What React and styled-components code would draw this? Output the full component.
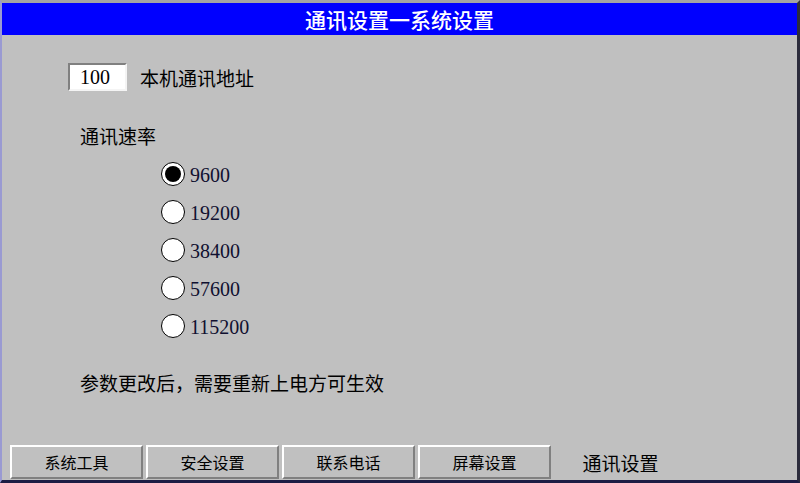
import React, { useState } from "react";
import styled, { createGlobalStyle } from "styled-components";

const GlobalStyle = createGlobalStyle`
  html, body {
    margin: 0;
    padding: 0;
    background: #c0c0c0;
  }
  #root {
    width: 800px;
    height: 483px;
  }
`;

const CJK = `"Noto Sans CJK SC", "Noto Sans", sans-serif`;
const NUM = `"Liberation Serif", "Times New Roman", serif`;

const Window = styled.div`
  box-sizing: border-box;
  width: 800px;
  height: 483px;
  display: flex;
  flex-direction: column;
  background: #c0c0c0;
  border-top: 3px solid #a4a4a4;
  border-left: 2px solid #9a9ad2;
  border-right: 3px solid #2c2c3c;
  border-bottom: 3px solid #1c1c44;
  font-family: ${CJK};
  color: #000;
`;

const TitleBar = styled.div`
  height: 32px;
  flex-shrink: 0;
  background: #0000ff;
  color: #fff;
  display: flex;
  align-items: center;
  justify-content: center;
  font-size: 21px;
  font-weight: 500;
`;

const Content = styled.div`
  padding: 28px 0 0 66px;
  display: flex;
  flex-direction: column;
`;

const AddressRow = styled.div`
  display: flex;
  align-items: center;
  gap: 13px;
  height: 28px;
`;

const NumberBox = styled.div`
  box-sizing: border-box;
  width: 59px;
  height: 28px;
  background: #fff;
  border-top: 2px solid #808080;
  border-left: 2px solid #808080;
  border-right: 2px solid #f4f4f4;
  border-bottom: 2px solid #f4f4f4;
  padding-left: 10px;
  display: flex;
  align-items: center;
  font-family: ${NUM};
  font-size: 20px;
`;

const Label = styled.div`
  font-size: 19px;
  line-height: 19px;
  margin-top: ${(p) => p.top || 0}px;
  padding-left: ${(p) => p.indent || 0}px;
`;

const RadioList = styled.div`
  margin-top: 10px;
  padding-left: 93px;
  display: flex;
  flex-direction: column;
`;

const RadioRow = styled.label`
  height: 38px;
  display: flex;
  align-items: center;
  gap: 5px;
  cursor: pointer;
`;

const Circle = styled.span`
  box-sizing: border-box;
  width: 24px;
  height: 24px;
  border-radius: 50%;
  border: 1.5px solid #000;
  background: #fff;
  display: flex;
  align-items: center;
  justify-content: center;

  &::after {
    content: "";
    width: 16px;
    height: 16px;
    border-radius: 50%;
    background: ${(p) => (p.checked ? "#000" : "transparent")};
  }
`;

const RadioText = styled.span`
  font-family: ${NUM};
  font-size: 20px;
  color: #101030;
  padding-top: 2px;
`;

const Footer = styled.div`
  margin-top: auto;
  display: flex;
  gap: 3px;
  padding: 0 0 1px 8px;
`;

const Tab = styled.div`
  box-sizing: border-box;
  width: 133px;
  height: 34px;
  display: flex;
  align-items: center;
  justify-content: center;
  font-size: ${(p) => (p.active ? 19 : 16)}px;
  background: #c0c0c0;
  border-top: 2px solid ${(p) => (p.active ? "transparent" : "#fff")};
  border-left: 2px solid ${(p) => (p.active ? "transparent" : "#fff")};
  border-right: 2px solid ${(p) => (p.active ? "transparent" : "#808080")};
  border-bottom: 2px solid ${(p) => (p.active ? "transparent" : "#808080")};
`;

const rates = ["9600", "19200", "38400", "57600", "115200"];
const tabs = ["系统工具", "安全设置", "联系电话", "屏幕设置", "通讯设置"];

export default function App() {
  const [rate, setRate] = useState("9600");

  return (
    <>
      <GlobalStyle />
      <Window>
        <TitleBar>通讯设置一系统设置</TitleBar>
        <Content>
          <AddressRow>
            <NumberBox>100</NumberBox>
            <Label>本机通讯地址</Label>
          </AddressRow>
          <Label top={35} indent={12}>通讯速率</Label>
          <RadioList>
            {rates.map((r) => (
              <RadioRow key={r} onClick={() => setRate(r)}>
                <Circle checked={rate === r} />
                <RadioText>{r}</RadioText>
              </RadioRow>
            ))}
          </RadioList>
          <Label top={28} indent={12}>参数更改后，需要重新上电方可生效</Label>
        </Content>
        <Footer>
          {tabs.map((t, i) => (
            <Tab key={t} active={i === tabs.length - 1}>{t}</Tab>
          ))}
        </Footer>
      </Window>
    </>
  );
}
